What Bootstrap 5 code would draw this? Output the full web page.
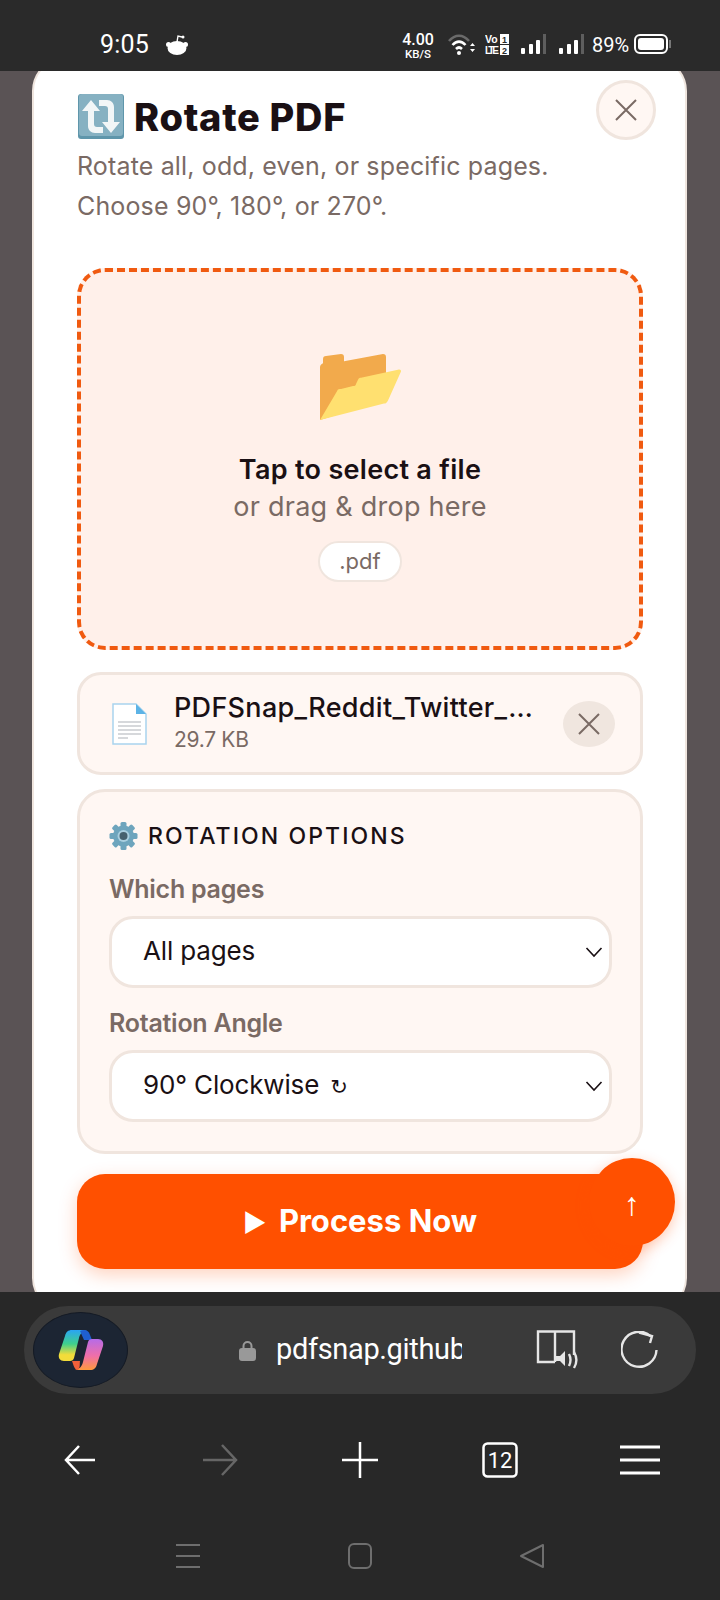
<!DOCTYPE html>
<html lang="en">
<head>
    <meta charset="UTF-8">
    <title>Rotate PDF</title>
    <link href="https://cdn.jsdelivr.net/npm/bootstrap@5.3.2/dist/css/bootstrap.min.css" rel="stylesheet">
    <style>
        html, body { height: 1600px; overflow: hidden; }
        body { background: #282828; font-family: Inter, "Liberation Sans", sans-serif; color: #1a1014; }

        /* phone status bar */
        .status-strip { height: 71px; background: #2a2a2a; color: #fff; padding-top: 30px; }
        .status-time { font-size: 25px; line-height: 30px; width: 49px; margin-left: 100px; font-family: Roboto, sans-serif; letter-spacing: .2px; }
        .net-speed { font-family: Roboto, sans-serif; font-weight: 500; text-align: center; width: 36px; margin-left: 211px; margin-top: 2px; line-height: 1; }
        .net-speed b { display: block; font-size: 16px; font-weight: 500; line-height: 16px; }
        .net-speed span { display: block; font-size: 11.5px; line-height: 12px; }
        .batt-text { font-family: Roboto, sans-serif; font-size: 20px; line-height: 22px; width: 38px; margin-left: 7px; white-space: nowrap; }

        /* page behind the modal */
        .page-area { height: 1221px; background: #5a5355; overflow: hidden; }
        .sheet { margin: -14px 33px 0 32px; height: 1255px; background: #fff; border: 2px solid #efe5de; border-radius: 34px; padding: 21px 42px 0 43px; position: relative; }
        .sheet-title { font-size: 38px; font-weight: 800; letter-spacing: .7px; line-height: 44px; }
        .title-row { margin: 14px 0 0 1px; gap: 10px; }
        .close-round { width: 60px; height: 60px; border-radius: 50%; background: #fff7f3; border: 3px solid #f0e5de; margin-right: -13px; }
        .sheet-sub { color: #7a6a64; font-size: 25px; line-height: 40px; margin: 6px 0 42px; letter-spacing: .15px; }

        .drop-area { height: 382px; background: #fff0ea; border: 4px dashed #f05a10; border-radius: 28px; padding-top: 82px; }
        .drop-main { font-size: 27px; font-weight: 600; line-height: 36px; margin-top: 32px; letter-spacing: .3px; }
        .drop-sub { color: #7a6a64; font-size: 27px; line-height: 36px; margin-top: 1px; letter-spacing: .25px; }
        .ext-chip { height: 41px; width: 84px; background: #fff; border: 2px solid #f0e5de; border-radius: 21px; color: #7a6a64; font-size: 22px; margin-top: 16px; }

        .file-row { height: 103px; margin-top: 22px; background: #fff7f3; border: 3px solid #f0e5de; border-radius: 24px; padding: 0 25px 0 32px; }
        .file-info { margin-left: 27px; }
        .file-name { font-size: 27px; font-weight: 500; line-height: 32px; width: 361px; white-space: nowrap; overflow: hidden; text-overflow: ellipsis; letter-spacing: .3px; }
        .file-size { color: #7a6a64; font-size: 21px; line-height: 32px; letter-spacing: -.3px; }
        .file-remove { width: 52px; height: 46px; border-radius: 50%; background: #f0e6df; }

        .options-box { margin-top: 14px; height: 365px; background: #fff7f3; border: 3px solid #f0e5de; border-radius: 28px; padding: 29px 28px 29px 29px; }
        .options-head { font-size: 23px; font-weight: 500; line-height: 30px; letter-spacing: 2.1px; }
        .gear-mark { margin-right: 10px; }
        .field-label { color: #7a6a64; font-size: 25px; font-weight: 600; line-height: 30px; letter-spacing: -.25px; display: block; margin: 0; }
        .label-first { margin-top: 23px; }
        .label-next { margin-top: 20px; }
        .form-select.option-select { height: 72px; margin-top: 12px; border: 3px solid #f0e5de; border-radius: 24px; font-size: 26px; color: #1a1014; padding: 0 40px 3px 31px; background-image: url("data:image/svg+xml,%3csvg xmlns='http://www.w3.org/2000/svg' viewBox='0 0 18 12'%3e%3cpath fill='none' stroke='%231a1014' stroke-width='1.6' d='M1.500 2 9 10l7.500-8'/%3e%3c/svg%3e"); background-size: 18px 12px; background-position: right 6px center; letter-spacing: -.15px; text-align: left; }
        .turn-glyph { font-family: "DejaVu Sans", sans-serif; font-size: 21px; margin-left: 4px; }

        .process-btn { display: block; width: 100%; height: 95px; margin-top: 20px; background: #ff5000; border: 0; border-radius: 28px; color: #fff; font-size: 31px; font-weight: 700; box-shadow: 0 6px 18px rgba(255, 80, 0, .25); }
        .run-mark { font-size: 25px; margin-right: 5px; }
        .top-fab { position: absolute; left: 555px; top: 1099px; width: 86px; height: 88px; border-radius: 50%; background: #ff5000; color: #fff; font-family: "Liberation Sans", sans-serif; font-size: 32px; box-shadow: 0 4px 14px rgba(255, 80, 0, .3); padding-top: 4px; }

        /* browser chrome */
        .url-bar { height: 88px; margin: 14px 24px 0; background: #3a3a3a; border-radius: 44px; padding-left: 9px; }
        .copilot-btn { width: 95px; height: 76px; background: #1c2533; border: 1px solid #141a24; border-radius: 50%; }
        .url-lock { margin-left: 111px; }
        .url-text { color: #fff; font-family: Roboto, sans-serif; font-size: 29px; width: 186px; overflow: hidden; white-space: nowrap; margin-left: 20px; letter-spacing: -.35px; }
        .reader-mark { margin-left: 74px; }
        .reload-mark { margin-left: 41px; }
        .tool-row { height: 132px; }
        .tool-slot { width: 140px; }
        .sys-row { height: 74px; padding-top: 17px; }
        .sys-slot { width: 172px; }
    </style>
</head>
<body>

<div class="status-strip d-flex align-items-start">
    <div class="status-time">9:05</div>
    <svg class="ms-3 mt-1" width="24" height="22" viewBox="0 0 24 22"><ellipse cx="12" cy="14" rx="9.500" ry="7" fill="#fff"/><circle cx="3.500" cy="10.500" r="2.500" fill="#fff"/><circle cx="20.500" cy="10.500" r="2.500" fill="#fff"/><path d="M12 8 13 2l4 1" fill="none" stroke="#fff" stroke-width="1.400"/><circle cx="18" cy="3" r="1.500" fill="#fff"/></svg>
    <div class="net-speed"><b>4.00</b><span>KB/S</span></div>
    <svg class="mt-1" style="margin-left:12px" width="28" height="22" viewBox="0 0 28 22"><path d="M1 7C7 0 15 0 21 7" fill="none" stroke="#6a6a6a" stroke-width="2.6"/><path d="M4.500 11c4-4.500 9-4.500 13 0" fill="none" stroke="#fff" stroke-width="2.6"/><path d="M8 15c2-2 4-2 6 0" fill="none" stroke="#fff" stroke-width="2.6"/><circle cx="11" cy="19" r="2" fill="#fff"/><path d="M22 12l2.500-3 2.500 3zM22 15l2.500 3 2.500-3z" fill="#fff"/></svg>
    <svg class="mt-1" style="margin-left:9px" width="26" height="22" viewBox="0 0 26 22"><text x="0" y="9" font-family="Liberation Sans" font-size="10.500" font-weight="700" fill="#fff">Vo</text><rect x="15" y="0" width="9" height="10" fill="#fff"/><text x="17" y="9" font-family="Liberation Sans" font-size="9" font-weight="700" fill="#2a2a2a">1</text><text x="0" y="20" font-family="Liberation Sans" font-size="10" font-weight="700" fill="#fff" textLength="14">LTE</text><rect x="15" y="11" width="9" height="10" fill="#fff"/><text x="17" y="20" font-family="Liberation Sans" font-size="9" font-weight="700" fill="#2a2a2a">2</text></svg>
    <svg class="mt-1" style="margin-left:10px" width="26" height="22" viewBox="0 0 26 22"><rect x="0" y="14" width="4" height="6" rx="1" fill="#fff"/><rect x="8" y="10" width="4" height="10" rx="1" fill="#fff"/><rect x="15" y="6" width="4" height="14" rx="1" fill="#fff"/><rect x="22" y="0" width="3" height="20" fill="#5e5e5e"/></svg>
    <svg class="mt-1" style="margin-left:12px" width="26" height="22" viewBox="0 0 26 22"><rect x="0" y="14" width="4" height="6" rx="1" fill="#fff"/><rect x="8" y="10" width="4" height="10" rx="1" fill="#fff"/><rect x="15" y="6" width="4" height="14" rx="1" fill="#fff"/><rect x="22" y="0" width="3" height="20" fill="#5e5e5e"/></svg>
    <div class="batt-text mt-1">89%</div>
    <svg class="mt-1" style="margin-left:4px" width="38" height="20" viewBox="0 0 38 20"><rect x="1" y="1" width="32" height="18" rx="5" fill="none" stroke="#fff" stroke-width="2"/><rect x="4" y="4" width="26" height="12" rx="3" fill="#fff"/><rect x="35" y="6" width="2" height="8" fill="#777"/></svg>
</div>

<div class="page-area">
    <div class="sheet">
        <div class="d-flex justify-content-between align-items-start">
            <div class="title-row d-flex align-items-center">
                <svg width="46" height="45" viewBox="0 0 46 45"><rect x="0" y="0" width="46" height="45" rx="3" fill="#5f96ab"/><rect x="1" y="0" width="44" height="42" rx="3" fill="#86b1c2"/><path d="M13 6 4 17h6v15c0 4 3 7 7 7h8v-6h-6c-2 0-3-1-3-3V17h6z" fill="#f2f6f7"/><path d="M33 39l9-11h-6V13c0-4-3-7-7-7h-8v6h6c2 0 3 1 3 3v13h-6z" fill="#f2f6f7"/></svg>
                <div class="sheet-title">Rotate PDF</div>
            </div>
            <button class="close-round d-flex align-items-center justify-content-center p-0" type="button" aria-label="Close">
                <svg width="24" height="24" viewBox="0 0 24 24"><path d="M2 2l20 20M22 2 2 22" stroke="#7a6a64" stroke-width="2" fill="none"/></svg>
            </button>
        </div>
        <div class="sheet-sub">Rotate all, odd, even, or specific pages.<br>Choose 90°, 180°, or 270°.</div>

        <div class="drop-area text-center">
            <svg class="d-block mx-auto" width="81" height="66" viewBox="0 0 81 64" preserveAspectRatio="none"><path d="M0 13c0-2 1-3 3-4V5c0-2 1-3 3-3l15-2c2 0 3 1 3 3v4L63 0c2 0 3 1 3 3v41L0 64z" fill="#f2aa4c"/><path d="M0 64 17 36c1-2 2-2 4-2l12-3c2 0 3-1 3-2l2-4c1-2 2-2 3-2l38-8c2 0 2 1 2 2L68 45c-1 2-2 3-4 3z" fill="#ffe070"/></svg>
            <div class="drop-main">Tap to select a file</div>
            <div class="drop-sub">or drag &amp; drop here</div>
            <div class="d-flex justify-content-center"><div class="ext-chip d-flex align-items-center justify-content-center">.pdf</div></div>
        </div>

        <div class="file-row d-flex align-items-center">
            <svg width="35" height="42" viewBox="0 0 35 42" class="flex-shrink-0"><path d="M1 1h23l10 10v30H1z" fill="#fff" stroke="#a9d4ee" stroke-width="1.500"/><path d="M24 1l10 10H24z" fill="#5cb3e6"/><path d="M6 19h23M6 23h23M6 27h23M6 31h23M6 35h10" stroke="#c9ccd0" stroke-width="1.500"/></svg>
            <div class="file-info me-auto">
                <div class="file-name">PDFSnap_Reddit_Twitter_Instagram.pdf</div>
                <div class="file-size">29.7 KB</div>
            </div>
            <div class="file-remove d-flex align-items-center justify-content-center flex-shrink-0">
                <svg width="22" height="22" viewBox="0 0 22 22"><path d="M1 1l20 20M21 1 1 21" stroke="#7a6a64" stroke-width="2" fill="none"/></svg>
            </div>
        </div>

        <div class="options-box">
            <div class="options-head d-flex align-items-center">
                <svg class="gear-mark flex-shrink-0" width="29" height="28" viewBox="0 0 28 28"><g fill="#6ea5bd"><circle cx="14" cy="14" r="10.500"/><rect x="11" y="0" width="6" height="28" rx="1.500"/><rect x="11" y="0" width="6" height="28" rx="1.500" transform="rotate(45 14 14)"/><rect x="11" y="0" width="6" height="28" rx="1.500" transform="rotate(90 14 14)"/><rect x="11" y="0" width="6" height="28" rx="1.500" transform="rotate(135 14 14)"/></g><circle cx="14" cy="14" r="6" fill="#a9cfe0"/><circle cx="14" cy="14" r="4" fill="#46616e"/></svg>
                <span>ROTATION OPTIONS</span>
            </div>
            <label class="field-label label-first" for="whichPages">Which pages</label>
            <button class="form-select option-select" id="whichPages" type="button">All pages</button>
            <label class="field-label label-next" for="rotationAngle">Rotation Angle</label>
            <button class="form-select option-select" id="rotationAngle" type="button">90° Clockwise <span class="turn-glyph">↻</span></button>
        </div>

        <button class="process-btn" type="button"><span class="run-mark">►</span> Process Now</button>
        <div class="top-fab d-flex align-items-center justify-content-center">↑</div>
    </div>
</div>

<div class="url-bar d-flex align-items-center">
    <div class="copilot-btn d-flex align-items-center justify-content-center flex-shrink-0">
        <svg width="46" height="40" viewBox="0 0 46 40">
            <defs>
                <linearGradient id="copLeft" x1="0" y1="0" x2="0" y2="1"><stop offset="0" stop-color="#2aa4f4"/><stop offset=".45" stop-color="#3fd08c"/><stop offset=".8" stop-color="#f2dc3a"/></linearGradient>
                <linearGradient id="copRight" x1="0" y1="0" x2="0" y2="1"><stop offset="0" stop-color="#b66be8"/><stop offset=".55" stop-color="#f06fa8"/><stop offset="1" stop-color="#ff9a3c"/></linearGradient>
            </defs>
            <path d="M14 0h15c-5 1-7 4-8 8l-5 20c-.5 2-2 3-4 3H6c-4 0-6-3-5-7L7 6c1-4 3-6 7-6z" fill="url(#copLeft)"/>
            <path d="M22 1c4-2 9-1 10 4l2 5H26z" fill="#1f5fd0"/>
            <path d="M32 40H17c5-1 7-4 8-8l5-20c.5-2 2-3 4-3h6c4 0 6 3 5 7l-6 18c-1 4-3 6-7 6z" fill="url(#copRight)"/>
            <path d="M14 31h8c-.5 3 .5 6-2 9-3 0-4-3-6-9z" fill="#f0603a"/>
        </svg>
    </div>
    <svg class="url-lock flex-shrink-0" width="17" height="21" viewBox="0 0 17 21"><path d="M4.500 9V6a4 4 0 0 1 8 0v3" fill="none" stroke="#999" stroke-width="2"/><rect x="0" y="8" width="17" height="13" rx="3" fill="#999"/></svg>
    <div class="url-text">pdfsnap.github</div>
    <svg class="reader-mark flex-shrink-0" width="44" height="40" viewBox="0 0 44 40"><path d="M19 32H2V1.500h36V25M19 32V1.500" fill="none" stroke="#e6e6e6" stroke-width="2.400"/><path d="M20 26h4l5-5v15l-5-5h-4z" fill="#e6e6e6"/><path d="M33 24c2 4 2 8 0 12M38 22c3 5 3 11 0 16" fill="none" stroke="#e6e6e6" stroke-width="2.400"/></svg>
    <svg class="reload-mark flex-shrink-0" width="38" height="38" viewBox="0 0 38 38"><path d="M30 5.500A17.500 17.500 0 1 0 35.500 19" fill="none" stroke="#e6e6e6" stroke-width="2.400"/><path d="M18 1.500 31 5l-2 7" fill="none" stroke="#e6e6e6" stroke-width="2.400"/></svg>
</div>

<div class="tool-row d-flex align-items-center justify-content-center">
    <div class="tool-slot d-flex justify-content-center"><svg width="32" height="30" viewBox="0 0 32 30"><path d="M31 15H2M15 1 2 15l13 14" fill="none" stroke="#fff" stroke-width="2.500"/></svg></div>
    <div class="tool-slot d-flex justify-content-center"><svg width="36" height="34" viewBox="0 0 36 34"><path d="M1 17h33M20 2l14 15-14 15" fill="none" stroke="#666" stroke-width="2.500"/></svg></div>
    <div class="tool-slot d-flex justify-content-center"><svg width="36" height="36" viewBox="0 0 36 36"><path d="M18 0v36M0 18h36" stroke="#fff" stroke-width="2.500"/></svg></div>
    <div class="tool-slot d-flex justify-content-center"><svg width="36" height="36" viewBox="0 0 36 36"><rect x="1.500" y="1.500" width="33" height="33" rx="4" fill="none" stroke="#fff" stroke-width="2.500"/><text x="18" y="26" font-family="Roboto" font-size="22" fill="#fff" text-anchor="middle">12</text></svg></div>
    <div class="tool-slot d-flex justify-content-center"><svg width="40" height="30" viewBox="0 0 40 30"><path d="M0 2h40M0 15h40M0 28h40" stroke="#fff" stroke-width="3"/></svg></div>
</div>

<div class="sys-row d-flex align-items-start justify-content-center">
    <div class="sys-slot d-flex justify-content-center"><svg width="26" height="26" viewBox="0 0 26 26"><path d="M1 2h24M1 13h24M1 24h24" stroke="#6e6e6e" stroke-width="2"/></svg></div>
    <div class="sys-slot d-flex justify-content-center"><svg width="26" height="26" viewBox="0 0 26 26"><rect x="2" y="1" width="22" height="24" rx="5" fill="none" stroke="#6e6e6e" stroke-width="2"/></svg></div>
    <div class="sys-slot d-flex justify-content-center"><svg width="26" height="26" viewBox="0 0 26 26"><path d="M24 2v22L2 13z" fill="none" stroke="#6e6e6e" stroke-width="2" stroke-linejoin="round"/></svg></div>
</div>

<script src="https://cdn.jsdelivr.net/npm/bootstrap@5.3.2/dist/js/bootstrap.bundle.min.js"></script>
</body>
</html>
